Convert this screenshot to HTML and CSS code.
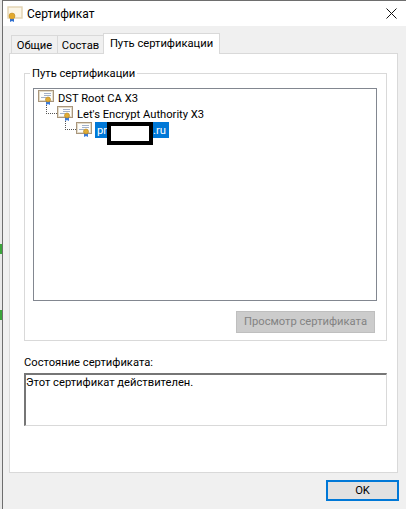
FILE: index.html
```html
<!DOCTYPE html>
<html lang="ru">
  <head>
    <meta charset="UTF-8" />
    <title>Сертификат</title>
    <link rel="stylesheet" href="styles.css">
  </head>
  <body>
    <svg width="0" height="0" class="defs">
      <symbol id="cert" viewBox="0 0 16 16">
        <rect x="0.5" y="0.5" width="15" height="11" fill="#f4efe3" stroke="#a9967c"/>
        <rect x="1.5" y="1.5" width="13" height="9" fill="#fdfdfb" stroke="#e3dbc9"/>
        <path d="M6 3.5h7M6 5.5h7M3 7.5h5" stroke="#a3b1c9" fill="none"/>
        <path d="M8 11v4l2-1 2 1v-4z" fill="#3b7bdc"/>
        <circle cx="10" cy="9.5" r="2.5" fill="#e0ab34" stroke="#b0821f" stroke-width="0.6"/>
      </symbol>
      <symbol id="cert-small" viewBox="0 0 16 16">
        <rect x="1" y="1" width="14" height="11" fill="#fbf5e6" stroke="#e2d2b0" stroke-width="1.4"/>
        <path d="M3 13v3l2-1 2 1v-3z" fill="#2f6fd0"/>
        <circle cx="5" cy="10" r="3" fill="#e2a92c" stroke="#b9851c" stroke-width="0.5"/>
      </symbol>
    </svg>

    <div class="desktop">
      <div class="strip strip-a"></div>
      <div class="strip strip-b"></div>
    </div>

    <div class="window">
      <div class="titlebar">
        <svg class="title-icon" width="16" height="16"><use href="#cert-small"/></svg>
        <span class="title">Сертификат</span>
        <svg class="close" width="11" height="11" viewBox="0 0 11 11">
          <path d="M.5.5l10 10M10.5.5l-10 10" stroke="#111" fill="none"/>
        </svg>
      </div>

      <div class="body">
        <div class="tabs">
          <div class="tab">Общие</div>
          <div class="tab">Состав</div>
          <div class="tab active">Путь сертификации</div>
        </div>

        <div class="page">
          <fieldset class="group">
            <legend>Путь сертификации</legend>
            <div class="tree">
              <div class="node">
                <svg width="16" height="16"><use href="#cert"/></svg>
                <span>DST Root CA X3</span>
              </div>
              <div class="node level-1">
                <svg width="16" height="16"><use href="#cert"/></svg>
                <span>Let's Encrypt Authority X3</span>
              </div>
              <div class="node level-2">
                <svg width="16" height="16"><use href="#cert"/></svg>
                <span class="selected">pr<span class="masked"></span>.ru</span>
              </div>
            </div>
            <div class="group-actions">
              <button class="btn-view" disabled>Просмотр сертификата</button>
            </div>
          </fieldset>

          <div class="status-label">Состояние сертификата:</div>
          <div class="status">Этот сертификат действителен.</div>
        </div>

        <div class="footer">
          <button class="btn-ok">OK</button>
        </div>
      </div>
    </div>
  </body>
</html>
```

FILE: styles.css
```css
html, body {
  margin: 0;
  padding: 0;
  height: 509px;
  overflow: hidden;
}
body {
  font-family: Roboto, "Noto Sans", sans-serif;
  font-size: 11.2px;
  line-height: 16px;
  color: #000;
  background: #fff;
  display: flex;
}
.defs {
  position: absolute;
}
.desktop {
  width: 2px;
  background: #e8e8e8;
  display: flex;
  flex-direction: column;
}
.strip {
  background: #3ba53b;
  height: 10px;
}
.strip-a {
  margin-top: 244px;
}
.strip-b {
  margin-top: 56px;
}
.window {
  flex: 1;
  border-left: 1px solid #6e6e6e;
  border-top: 1px solid #6e6e6e;
  display: flex;
  flex-direction: column;
}
.titlebar {
  height: 25px;
  flex: none;
  background: #fff;
  display: flex;
  align-items: center;
  padding: 0 9px 0 4px;
  gap: 4px;
}
.title {
  flex: 1;
  font-size: 12px;
}
.body {
  flex: 1;
  background: #f0f0f0;
  padding: 7px 8px 0 6px;
  display: flex;
  flex-direction: column;
}
.tabs {
  display: flex;
  align-items: flex-end;
  height: 20px;
  padding-left: 2px;
  position: relative;
  z-index: 1;
}
.tab {
  box-sizing: border-box;
  width: 47px;
  height: 18px;
  line-height: 20px;
  text-align: center;
  background: #f0f0f0;
  border: 1px solid #d9d9d9;
  border-bottom: 0;
  margin-right: -1px;
}
.tab.active {
  width: 117px;
  height: 21px;
  line-height: 20px;
  background: #fff;
  margin-bottom: -1px;
}
.page {
  box-sizing: border-box;
  height: 420px;
  background: #fff;
  border: 1px solid #d9d9d9;
  padding: 11px 10px 0 14px;
}
.group {
  margin: 0;
  padding: 0 9px 0 8px;
  border: 1px solid #d9d9d9;
  height: 276px;
  box-sizing: border-box;
  min-width: 0;
}
.group legend {
  height: 16px;
  line-height: 18px;
  padding: 0 2px;
  margin-left: -3px;
}
.tree {
  height: 213px;
  border: 1px solid #828790;
  padding: 1px 4px;
  box-sizing: border-box;
  margin-top: 7px;
}
.node {
  display: flex;
  align-items: center;
  height: 16px;
  gap: 4px;
  position: relative;
}
.node span {
  height: 16px;
  line-height: 18px;
}
.level-1 { margin-left: 19px; }
.level-2 { margin-left: 38px; gap: 3px; }
.level-1::before,
.level-2::before {
  content: "";
  position: absolute;
  left: -11px;
  top: -1px;
  width: 10px;
  height: 8px;
  border-left: 1px dotted #555;
  border-bottom: 1px dotted #555;
}
.selected {
  background: #0078d7;
  color: #fff;
  padding: 0 3px 0 2px;
  display: flex;
}
.node .masked {
  box-sizing: border-box;
  width: 46px;
  height: 23px;
  background: #fff;
  border: 4px solid #000;
  flex: none;
}
.group-actions {
  display: flex;
  justify-content: flex-end;
  margin-top: 10px;
  padding-right: 2px;
}
.btn-view {
  width: 139px;
  height: 22px;
  border: 1px solid #bfbfbf;
  background: #ccc;
  color: #838383;
  font: inherit;
  padding: 0;
}
.status-label {
  margin-top: 13px;
  height: 16px;
  line-height: 18px;
}
.status {
  margin-top: 3px;
  height: 53px;
  box-sizing: border-box;
  background: #fff;
  border: 1px solid #d9d9d9;
  border-top: 2px solid #767676;
  border-left: 2px solid #767676;
  padding: 0;
}
.footer {
  display: flex;
  justify-content: flex-end;
  padding-top: 7px;
  margin-right: -1px;
}
.btn-ok {
  width: 73px;
  height: 21px;
  border: 2px solid #0078d7;
  background: #e1e1e1;
  font: inherit;
  color: #000;
  padding: 0;
}
```
